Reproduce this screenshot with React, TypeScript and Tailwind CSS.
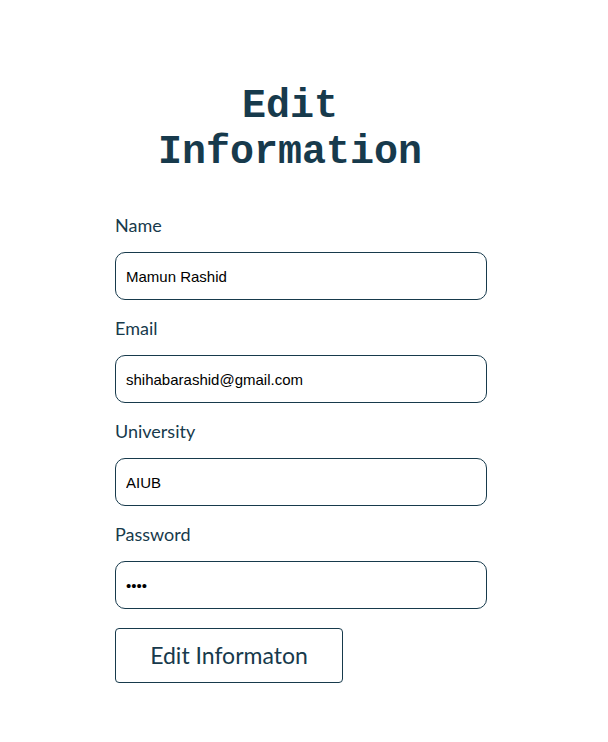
import React from "react";

const fields = [
  { label: "Name", value: "Mamun Rashid", type: "text" },
  { label: "Email", value: "shihabarashid@gmail.com", type: "text" },
  { label: "University", value: "AIUB", type: "text" },
  { label: "Password", value: "abcd", type: "password" },
];

export default function App() {
  return (
    <div className="min-h-screen bg-white text-[#173a4c]">
      <div className="pl-[115px] pt-[84px]">
        <h1 className="w-[350px] text-center text-[40px] leading-[46px] font-bold font-['Courier_New','Liberation_Mono',monospace]">
          Edit Information
        </h1>

        <form className="mt-[36px] w-[372px] flex flex-col" onSubmit={(e) => e.preventDefault()}>
          {fields.map((f) => (
            <div key={f.label} className="flex flex-col mb-[15px]">
              <label className="text-[18px] leading-[27px] mb-[13px] font-['Gill_Sans','Lato',sans-serif]">
                {f.label}
              </label>
              <input
                type={f.type}
                defaultValue={f.value}
                className="h-[48px] w-full rounded-[10px] border border-[#173a4c] px-[10px] text-[15px] text-black font-['Liberation_Sans',Arial,sans-serif] outline-none"
              />
            </div>
          ))}
          <button
            type="submit"
            className="mt-[4px] w-[228px] h-[55px] rounded-[4px] border border-[#173a4c] bg-white text-[23px] font-['Gill_Sans','Lato',sans-serif] text-[#173a4c]"
          >
            Edit Informaton
          </button>
        </form>
      </div>
    </div>
  );
}
